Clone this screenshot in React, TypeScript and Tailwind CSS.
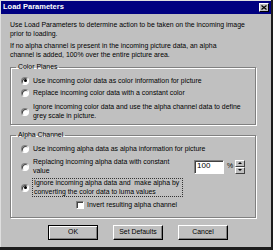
import React from "react";

function Radio({ checked }: { checked?: boolean }) {
  return (
    <span className="relative inline-block h-[8px] w-[8px] shrink-0 rounded-full border border-t-[#808080] border-l-[#808080] border-r-white border-b-white bg-white shadow-[inset_1px_1px_0_#404040]">
      {checked && (
        <span className="absolute left-[1.5px] top-[1.5px] h-[3px] w-[3px] rounded-full bg-black" />
      )}
    </span>
  );
}

function Button({ label, primary }: { label: string; primary?: boolean }) {
  return (
    <div
      className={
        primary
          ? "flex h-[15px] w-[50px] items-center justify-center border border-black bg-[#c0c0c0] shadow-[inset_1px_1px_0_#fff,inset_-1px_-1px_0_#808080]"
          : "flex h-[15px] w-[50px] items-center justify-center border border-t-white border-l-white border-r-black border-b-black bg-[#c0c0c0] shadow-[inset_-1px_-1px_0_#808080]"
      }
    >
      {label}
    </div>
  );
}

const groupBox =
  "mx-0 border border-[#808080] px-[10px] shadow-[inset_1px_1px_0_#fff,1px_1px_0_#fff]";

export default function App() {
  return (
    <div className="h-[250px] w-[273px] overflow-hidden whitespace-nowrap bg-[#1c1c1c] font-['Liberation_Sans',Arial,sans-serif] text-[6.9px] leading-[8.5px] text-black">
      <div className="flex h-[247px] w-[271px] flex-col border-l border-t border-l-[#dfdfdf] border-t-[#dfdfdf] bg-[#c0c0c0]">
        {/* title bar */}
        <div className="flex h-[13px] shrink-0 items-center justify-between bg-[#000080] pl-[2px] pr-[2px]">
          <span className="text-[7.5px] font-bold text-white">Load Parameters</span>
          <div className="flex h-[9px] w-[10px] items-center justify-center border border-t-white border-l-white border-r-black border-b-black bg-[#c0c0c0]">
            <svg width="6" height="5" viewBox="0 0 6 5">
              <path d="M0.5 0.5 L5.5 4.5 M5.5 0.5 L0.5 4.5" stroke="#000" strokeWidth="1.2" />
            </svg>
          </div>
        </div>

        <div className="flex flex-col px-[9px] pt-[7px]">
          <p>
            Use Load Parameters to determine action to be taken on the incoming image
            <br />
            prior to loading.
          </p>
          <p className="mt-[4px]">
            If no alpha channel is present in the incoming picture data, an alpha
            <br />
            channel is added, 100% over the entire picture area.
          </p>

          {/* Color Planes */}
          <fieldset className={`${groupBox} mt-[4px] w-[246px] pb-[4px] pt-[5px]`}>
            <legend className="ml-[-5px] px-[2px]">Color Planes</legend>
            <div className="flex items-center gap-[4px]">
              <Radio checked />
              <span>Use incoming color data as color information for picture</span>
            </div>
            <div className="mt-[3.5px] flex items-center gap-[4px]">
              <Radio />
              <span>Replace incoming color data with a constant color</span>
            </div>
            <div className="mt-[6px] flex items-center gap-[4px]">
              <Radio />
              <span>
                Ignore incoming color data and use the alpha channel data to define
                <br />
                grey scale in picture.
              </span>
            </div>
          </fieldset>

          {/* Alpha Channel */}
          <fieldset className={`${groupBox} mt-[6px] w-[246px] pb-[7px] pt-[5px]`}>
            <legend className="ml-[-5px] px-[2px]">Alpha Channel</legend>
            <div className="flex items-center gap-[4px]">
              <Radio />
              <span>Use incoming alpha data as alpha information for picture</span>
            </div>
            <div className="mt-[5px] flex items-center">
              <Radio />
              <span className="ml-[4px] w-[150px]">
                Replacing incoming alpha data with constant
                <br />
                value
              </span>
              <div className="ml-[11px] flex h-[14px] w-[30px] items-center border border-t-[#808080] border-l-[#808080] border-r-white border-b-white bg-white pl-[2px] text-[8px] shadow-[inset_1px_1px_0_#404040]">
                100
              </div>
              <span className="ml-[3px]">%</span>
              <div className="ml-[2px] flex flex-col">
                <div className="flex h-[7px] w-[10px] items-center justify-center border border-t-white border-l-white border-r-[#404040] border-b-[#404040] bg-[#c0c0c0]">
                  <svg width="4" height="2" viewBox="0 0 4 2">
                    <path d="M0 2 L2 0 L4 2 Z" fill="#000" />
                  </svg>
                </div>
                <div className="flex h-[7px] w-[10px] items-center justify-center border border-t-white border-l-white border-r-[#404040] border-b-[#404040] bg-[#c0c0c0]">
                  <svg width="4" height="2" viewBox="0 0 4 2">
                    <path d="M0 0 L4 0 L2 2 Z" fill="#000" />
                  </svg>
                </div>
              </div>
            </div>
            <div className="mt-[3px] flex items-center">
              <Radio checked />
              <span className="ml-[3px] w-[151px] border border-dotted border-[#333] px-[1px]">
                Ignore incoming alpha data and&nbsp; make alpha by
                <br />
                converting the color data to luma values
              </span>
            </div>
            <div className="ml-[55px] mt-[4px] flex items-center gap-[3px]">
              <span className="inline-block h-[8px] w-[8px] border border-t-[#808080] border-l-[#808080] border-r-white border-b-white bg-white shadow-[inset_1px_1px_0_#404040]" />
              <span>Invert resulting alpha channel</span>
            </div>
          </fieldset>

          <div className="ml-[38px] mt-[7px] flex gap-[15px]">
            <Button label="OK" primary />
            <Button label="Set Defaults" />
            <Button label="Cancel" />
          </div>
        </div>
      </div>
    </div>
  );
}
